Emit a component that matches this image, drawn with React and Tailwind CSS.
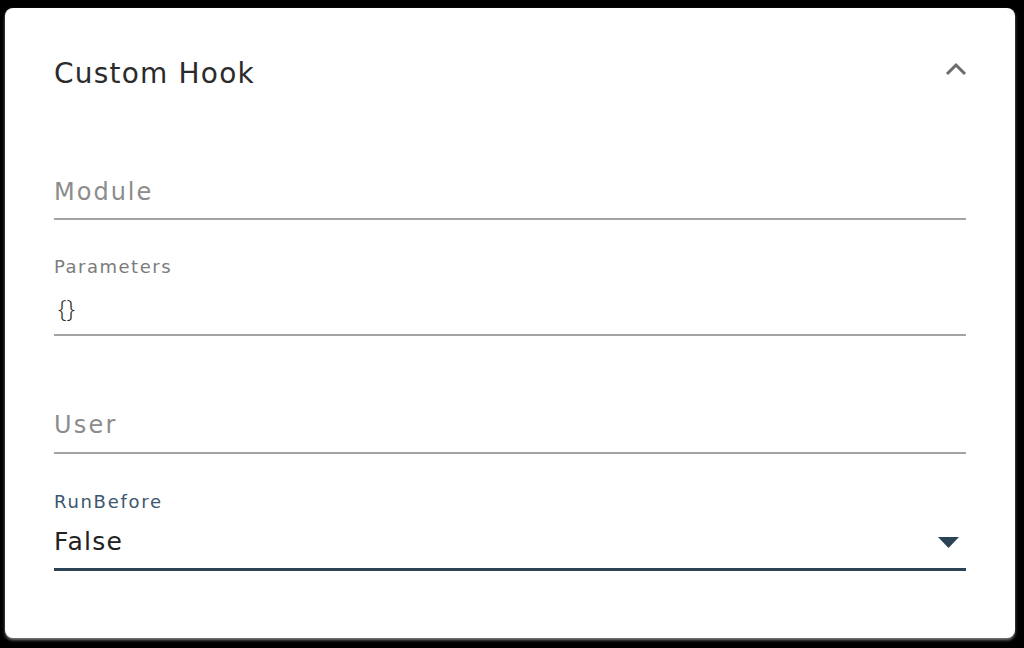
export default function App() {
    return <div className="h-[648px] w-[1024px] bg-black pt-[8px] pl-[5px]" style={{ fontFamily: '"DejaVu Sans", "Noto Sans", sans-serif' }}>
        <div className="w-[1010px] h-[630px] bg-white rounded-lg shadow-[0_2px_3px_rgba(255,255,255,0.5)] px-[49px]">
            <div className="flex justify-between items-start pt-[49px]">
                <div className="text-[28px] leading-[34px] tracking-[1.2px] text-[#2b2b2b]">Custom Hook</div>
                <svg className="mt-[4px] mr-[-2px]" width="24" height="16" viewBox="0 0 24 16">
                    <polyline points="3,13 12,4 21,13" fill="none" stroke="#6b6b6b" strokeWidth="3" />
                </svg>
            </div>
            <div className="mt-[85px] border-b-2 border-[#a3a3a3] pb-[10px]">
                <div className="text-[24px] leading-[32px] tracking-[2px] text-[#8c8c8c]">Module</div>
            </div>
            <div className="mt-[35px] border-b-2 border-[#a3a3a3] pb-[10px]">
                <div className="text-[18px] leading-[24px] tracking-[1.5px] text-[#7c7c7c]">Parameters</div>
                <div className="mt-[13px] text-[24px] leading-[32px] text-[#222] pl-[4px] font-light" style={{ fontFamily: '"Open Sans", sans-serif' }}>{"{}"}</div>
            </div>
            <div className="mt-[73px] border-b-2 border-[#a3a3a3] pb-[11px]">
                <div className="text-[24px] leading-[32px] tracking-[2.2px] text-[#8c8c8c]">User</div>
            </div>
            <div className="mt-[36px] border-b-[3px] border-[#2c4356] pb-[10px]">
                <div className="text-[18px] leading-[24px] tracking-[1.7px] text-[#3d566e]">RunBefore</div>
                <div className="mt-[12px] flex items-center justify-between">
                    <div className="text-[25px] leading-[32px] tracking-[1.3px] text-[#222]">False</div>
                    <svg className="mr-[7px]" width="21" height="11" viewBox="0 0 21 11">
                        <polygon points="0,0 21,0 10.5,11" fill="#2c4356" />
                    </svg>
                </div>
            </div>
        </div>
    </div>
}
